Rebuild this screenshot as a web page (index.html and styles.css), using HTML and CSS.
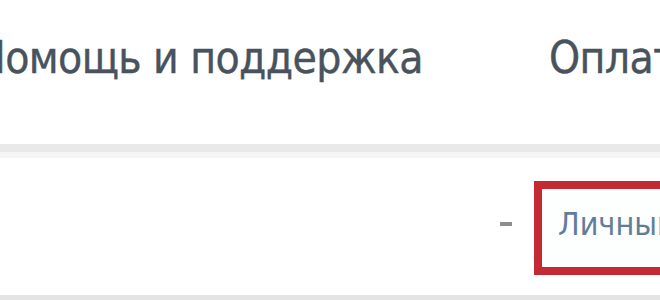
FILE: index.html
```html
<!DOCTYPE html>
<html lang="ru">
<head>
<meta charset="utf-8">
<link rel="stylesheet" href="styles.css">
</head>
<body>
<div class="page">
  <nav class="nav">
    <span class="nav-item first">Помощь и поддержка</span>
    <span class="nav-item">Оплата</span>
  </nav>
  <div class="divider"></div>
  <div class="toolbar">
    <span class="dash"></span>
    <div class="account">
      <span class="account-label">Личный кабинет</span>
    </div>
  </div>
  <div class="footer-band"></div>
</div>
</body>
</html>
```
FILE: styles.css
```css
html, body {
  margin: 0;
  padding: 0;
  background: #ffffff;
}
.page {
  width: 660px;
  height: 300px;
  overflow: hidden;
  display: flex;
  flex-direction: column;
  font-family: "DejaVu Sans Condensed", "DejaVu Sans", sans-serif;
}
.nav {
  height: 144px;
  display: flex;
  align-items: flex-start;
  gap: 126px;
  padding-top: 33px;
  box-sizing: border-box;
  margin-left: -24px;
  white-space: nowrap;
}
.nav-item {
  font-size: 44px;
  line-height: 50px;
  color: #48535e;
  letter-spacing: -0.6px;
  -webkit-text-stroke: 0.4px #48535e;
}
.divider {
  height: 8px;
  background: #e9e9e9;
  border-bottom: 6px solid #f6f6f6;
  flex: none;
}
.toolbar {
  flex: 1;
  display: flex;
  align-items: flex-start;
  padding-top: 23px;
  padding-left: 500px;
  box-sizing: border-box;
  white-space: nowrap;
}
.dash {
  width: 12px;
  height: 4px;
  background: #8a8f94;
  margin-top: 41px;
  margin-right: 22px;
  flex: none;
}
.account {
  flex: none;
  border: 8px solid #c42a33;
  height: 70px;
  box-sizing: content-box;
  padding: 0 16px 8px 16px;
  display: flex;
  align-items: center;
  background: #fdfefe;
}
.account-label {
  font-size: 32px;
  color: #637c98;
}
.footer-band {
  height: 5px;
  background: #e4e4e4;
  flex: none;
}
```
